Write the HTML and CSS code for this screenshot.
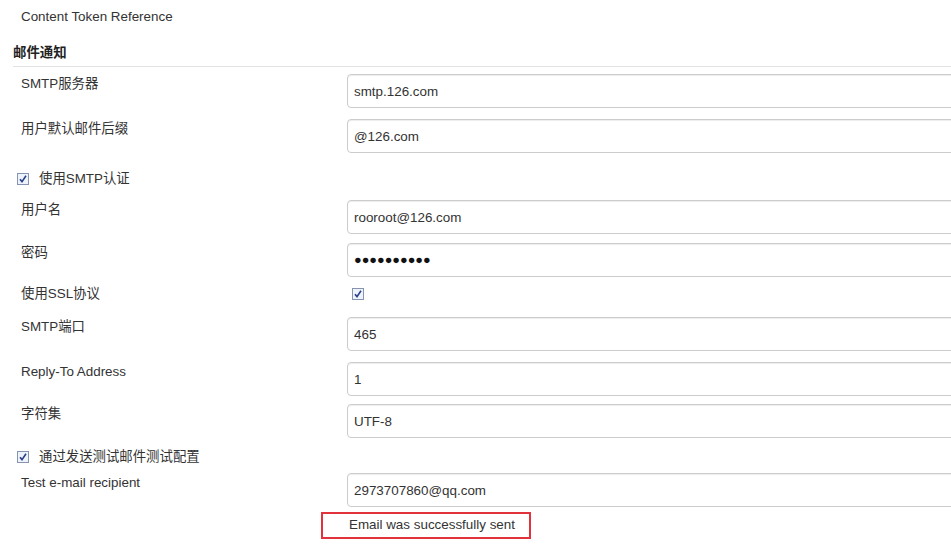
FILE: index.html
```html
<!DOCTYPE html>
<html>
	<head>
		<meta charset="utf-8">
		<link rel="stylesheet" href="styles.css">
	</head>
	<body>

	<div class="config">
		<div class="token-ref">Content Token Reference</div>

		<div class="section-title">邮件通知</div>

		<div class="row first">
			<div class="label">SMTP服务器</div>
			<div class="field"><input class="text" value="smtp.126.com"></div>
		</div>
		<div class="row">
			<div class="label">用户默认邮件后缀</div>
			<div class="field"><input class="text" value="@126.com"></div>
		</div>

		<div class="check-row">
			<span class="cb"><svg width="12" height="12" viewBox="0 0 12 12"><rect x="0.5" y="0.5" width="11" height="11" fill="#eef2fa" stroke="#8794b0"/><path d="M3 6.2 L5 8.6 L9 2.8" fill="none" stroke="#2a3f8a" stroke-width="1.6"/></svg></span>
			<span>使用SMTP认证</span>
		</div>

		<div class="row after-check">
			<div class="label">用户名</div>
			<div class="field"><input class="text" value="rooroot@126.com"></div>
		</div>
		<div class="row pw-row">
			<div class="label">密码</div>
			<div class="field"><input class="text pw" value="●●●●●●●●●●"></div>
		</div>
		<div class="row ssl">
			<div class="label">使用SSL协议</div>
			<div class="field"><span class="cb"><svg width="12" height="12" viewBox="0 0 12 12"><rect x="0.5" y="0.5" width="11" height="11" fill="#eef2fa" stroke="#8794b0"/><path d="M3 6.2 L5 8.6 L9 2.8" fill="none" stroke="#2a3f8a" stroke-width="1.6"/></svg></span></div>
		</div>
		<div class="row after-ssl">
			<div class="label">SMTP端口</div>
			<div class="field"><input class="text" value="465"></div>
		</div>
		<div class="row">
			<div class="label">Reply-To Address</div>
			<div class="field"><input class="text" value="1"></div>
		</div>
		<div class="row tight">
			<div class="label">字符集</div>
			<div class="field"><input class="text" value="UTF-8"></div>
		</div>

		<div class="check-row second">
			<span class="cb"><svg width="12" height="12" viewBox="0 0 12 12"><rect x="0.5" y="0.5" width="11" height="11" fill="#eef2fa" stroke="#8794b0"/><path d="M3 6.2 L5 8.6 L9 2.8" fill="none" stroke="#2a3f8a" stroke-width="1.6"/></svg></span>
			<span>通过发送测试邮件测试配置</span>
		</div>

		<div class="row close">
			<div class="label">Test e-mail recipient</div>
			<div class="field"><input class="text" value="2973707860@qq.com"></div>
		</div>
		<div class="row result">
			<div class="label"></div>
			<div class="field"><span class="notice">Email was successfully sent</span></div>
		</div>
	</div>

	</body>
</html>
```

FILE: styles.css
```css
body{
	margin: 0;
	overflow: hidden;
	background: #fff;
	font-family: "Liberation Sans", Arial, "Noto Sans CJK SC", sans-serif;
	font-size: 13.4px;
	line-height: 18px;
	color: #333;
}

.config{
	width: 951px;
}

.token-ref{
	padding: 8px 0 0 21px;
}

.section-title{
	margin: 18px 0 0 13px;
	padding-bottom: 4px;
	font-weight: bold;
	color: #222;
	border-bottom: 1px solid #e3e3e3;
}

.row{
	display: grid;
	grid-template-columns: 347px 1fr;
	margin-top: 11px;
}
.row.first{ margin-top: 7px; }
.row.tight{ margin-top: 8px; }
.row.after-check{ margin-top: 12px; }
.row.pw-row{ margin-top: 9px; }
.row.after-ssl{ margin-top: 14px; }
.row.close{ margin-top: 7px; }

.row .label{
	padding: 1px 0 0 21px;
}

.text{
	display: block;
	box-sizing: border-box;
	width: calc(100% + 30px);
	height: 34px;
	margin: 0;
	padding: 0 6px;
	font-family: inherit;
	font-size: 13.4px;
	color: #333;
	background: #fff;
	border: 1px solid #ccc;
	border-radius: 4px;
	box-shadow: inset 0 1px 1px rgba(0,0,0,.075);
	outline: none;
}

.text.pw{
	font-size: 12.7px;
	color: #111;
}

.row.ssl{
	margin-top: 8px;
	height: 18px;
}
.row.ssl .label{
	padding-top: 0;
}
.row.ssl .cb{
	margin: 3px 0 0 5px;
}

.check-row{
	display: flex;
	align-items: center;
	gap: 10px;
	margin: 17px 0 0 17px;
	height: 18px;
}
.check-row.second{
	margin-top: 10px;
}

.cb{
	display: inline-block;
	width: 12px;
	height: 12px;
	line-height: 0;
}

.row.result{
	margin-top: 5px;
}
.notice{
	display: inline-block;
	margin-left: -26px;
	padding: 2px 14px 3px 26px;
	border: 2px solid #e2323c;
}
```
